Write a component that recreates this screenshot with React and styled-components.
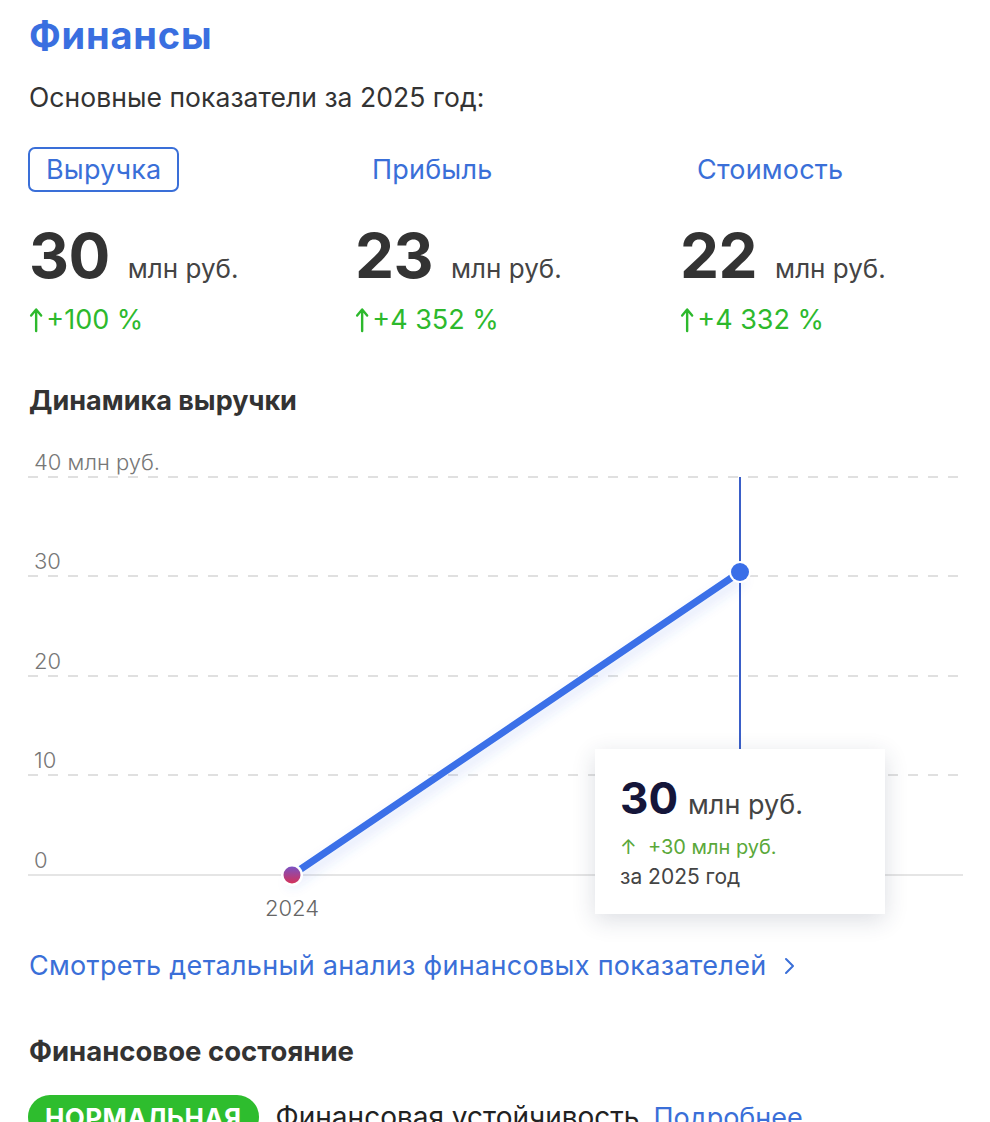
import React from "react";
import styled, { createGlobalStyle } from "styled-components";

const Global = createGlobalStyle`
  html, body { margin: 0; padding: 0; background: #fff; }
  body { font-family: Inter, "Noto Sans", sans-serif; color: #333; -webkit-font-smoothing: antialiased; }
`;

const Page = styled.div`
  width: 990px;
  box-sizing: border-box;
  padding: 10px 20px 0 29px;
  overflow: hidden;
  height: 1122px;
`;

const Title = styled.h1`
  margin: 0;
  font-size: 38px;
  line-height: 50px;
  font-weight: 700;
  color: #3a6fe0;
  letter-spacing: 0.8px;
`;

const Subtitle = styled.p`
  margin: 21px 0 0;
  font-size: 26.5px;
  line-height: 32px;
  font-weight: 400;
  color: #333;
  letter-spacing: 0.05px;
`;

const Grid = styled.div`
  display: grid;
  grid-template-columns: 326px 325px 325px;
  margin-top: ${(p) => p.$mt || 0}px;
`;

const Tab = styled.button`
  justify-self: start;
  height: 45px;
  margin-left: -1px;
  padding: 0 16px;
  box-sizing: border-box;
  border: 2px solid ${(p) => (p.$active ? "#3a6fd8" : "transparent")};
  border-radius: 7px;
  background: #fff;
  font-family: inherit;
  font-size: 27px;
  letter-spacing: 0.2px;
  color: #3a6fd8;
  cursor: pointer;
`;

const ValueRow = styled.div`
  display: flex;
  align-items: baseline;
  gap: 18px;
`;

const BigNum = styled.span`
  font-size: 62px;
  line-height: 62px;
  font-weight: 700;
  color: #333;
  letter-spacing: -0.5px;
`;

const Unit = styled.span`
  font-size: 26px;
  color: #444;
  font-weight: 400;
`;

const Change = styled.div`
  display: flex;
  align-items: center;
  gap: 3px;
  font-size: 27px;
  line-height: 30px;
  color: #2db92d;
`;

const SectionTitle = styled.h2`
  margin: ${(p) => p.$mt}px 0 0;
  font-size: ${(p) => p.$size || 27}px;
  line-height: 30px;
  font-weight: 700;
  color: #333;
`;

const Chart = styled.div`
  position: relative;
  margin: 23px 0 0 -1px;
  width: 935px;
  height: 490px;
`;

const Tooltip = styled.div`
  position: absolute;
  left: 567px;
  top: 310px;
  width: 290px;
  height: 165px;
  box-sizing: border-box;
  padding: 26px 0 0 25px;
  background: #fff;
  box-shadow: 0 6px 22px rgba(40, 50, 80, 0.16);
`;

const TipValue = styled.div`
  display: flex;
  align-items: baseline;
  gap: 10px;
`;

const TipNum = styled.span`
  font-size: 44px;
  line-height: 46px;
  font-weight: 700;
  color: #15163a;
`;

const TipUnit = styled.span`
  font-size: 27px;
  color: #444;
`;

const TipDelta = styled.div`
  margin-top: 14px;
  font-size: 20px;
  line-height: 24px;
  color: #5aa83a;
`;

const TipPeriod = styled.div`
  margin-top: 6px;
  font-size: 21px;
  line-height: 24px;
  color: #444;
`;

const Link = styled.a`
  display: flex;
  align-items: center;
  gap: 18px;
  margin-top: 21px;
  font-size: 27px;
  line-height: 32px;
  letter-spacing: 0.3px;
  color: #3a6fd8;
  text-decoration: none;
`;

const StatusRow = styled.div`
  display: flex;
  align-items: center;
  gap: 17px;
  margin-top: 29px;
  font-size: 28px;
  color: #222;
`;

const Badge = styled.span`
  display: inline-flex;
  align-items: center;
  height: 44px;
  margin-left: -1px;
  padding: 0 17px;
  border-radius: 22px;
  background: #2ebd2e;
  color: #fff;
  font-weight: 700;
  font-size: 26px;
  letter-spacing: 0.4px;
`;

const More = styled.span`
  color: #3a6fd8;
  margin-left: -3px;
  font-size: 27px;
`;

const UpArrow = ({ size = 26, color = "#2db92d" }) => (
  <svg width={size * 0.55} height={size} viewBox="0 0 14 26" fill="none">
    <path d="M7 24V3M2 8.5L7 2.5L12 8.5" stroke={color} strokeWidth="2.4" strokeLinecap="round" strokeLinejoin="round" />
  </svg>
);

const metrics = [
  { tab: "Выручка", value: "30", change: "+100 %", active: true },
  { tab: "Прибыль", value: "23", change: "+4 352 %" },
  { tab: "Стоимость", value: "22", change: "+4 332 %" },
];

const grid = [
  { y: 38, label: "40 млн руб." },
  { y: 137, label: "30" },
  { y: 237, label: "20" },
  { y: 336, label: "10" },
];

const axisText = { fontSize: 22, fill: "#777", fontFamily: "Inter, sans-serif", fontWeight: 300 };

function RevenueChart() {
  return (
    <Chart>
      <svg width="935" height="490" viewBox="0 0 935 490">
        <defs>
          <linearGradient id="dot24" x1="0" y1="0" x2="0" y2="1">
            <stop offset="0" stopColor="#7a52c4" />
            <stop offset="1" stopColor="#d4325a" />
          </linearGradient>
          <filter id="lineShadow" x="-10%" y="-10%" width="120%" height="130%">
            <feDropShadow dx="0" dy="8" stdDeviation="6" floodColor="#3a6fe8" floodOpacity="0.18" />
          </filter>
        </defs>
        {grid.map((g) => (
          <g key={g.y}>
            <line x1="0" x2="935" y1={g.y} y2={g.y} stroke="#d6d6d6" strokeWidth="1.5" strokeDasharray="10 10" />
            <text x="6" y={g.y - 7} {...axisText}>
              {g.label}
            </text>
          </g>
        ))}
        <line x1="0" x2="935" y1="436" y2="436" stroke="#dcdcdc" strokeWidth="1.5" />
        <text x="6" y="429" {...axisText}>0</text>
        <line x1="712" x2="712" y1="38" y2="436" stroke="#3a5fc8" strokeWidth="2" />
        <line x1="264" y1="436" x2="712" y2="133" stroke="#3a6fe8" strokeWidth="7" strokeLinecap="round" filter="url(#lineShadow)" />
        <circle cx="264" cy="436" r="11" fill="#fff" />
        <circle cx="264" cy="436" r="8.5" fill="url(#dot24)" />
        <circle cx="712" cy="133" r="11" fill="#fff" />
        <circle cx="712" cy="133" r="9" fill="#3a6fe8" />
        <text x="264" y="477" textAnchor="middle" {...axisText} fill="#666">2024</text>
      </svg>
      <Tooltip>
        <TipValue>
          <TipNum>30</TipNum>
          <TipUnit>млн руб.</TipUnit>
        </TipValue>
        <TipDelta>↑&nbsp; +30 млн руб.</TipDelta>
        <TipPeriod>за 2025 год</TipPeriod>
      </Tooltip>
    </Chart>
  );
}

export default function App() {
  return (
    <>
      <Global />
      <Page>
        <Title>Финансы</Title>
        <Subtitle>Основные показатели за 2025 год:</Subtitle>
        <Grid $mt={34}>
          {metrics.map((m) => (
            <Tab key={m.tab} $active={m.active}>{m.tab}</Tab>
          ))}
        </Grid>
        <Grid $mt={33}>
          {metrics.map((m) => (
            <ValueRow key={m.tab}>
              <BigNum>{m.value}</BigNum>
              <Unit>млн руб.</Unit>
            </ValueRow>
          ))}
        </Grid>
        <Grid $mt={18}>
          {metrics.map((m) => (
            <Change key={m.tab}>
              <UpArrow />
              {m.change}
            </Change>
          ))}
        </Grid>
        <SectionTitle $mt={51}>Динамика выручки</SectionTitle>
        <RevenueChart />
        <Link href="#">
          Смотреть детальный анализ финансовых показателей
          <svg width="12" height="20" viewBox="0 0 12 20" fill="none">
            <path d="M2 3l7 7-7 7" stroke="#3a6fd8" strokeWidth="2" strokeLinecap="round" strokeLinejoin="round" />
          </svg>
        </Link>
        <SectionTitle $mt={54} $size={27.5}>Финансовое состояние</SectionTitle>
        <StatusRow>
          <Badge>НОРМАЛЬНАЯ</Badge>
          <span>Финансовая устойчивость</span>
          <More>Подробнее</More>
        </StatusRow>
      </Page>
    </>
  );
}
